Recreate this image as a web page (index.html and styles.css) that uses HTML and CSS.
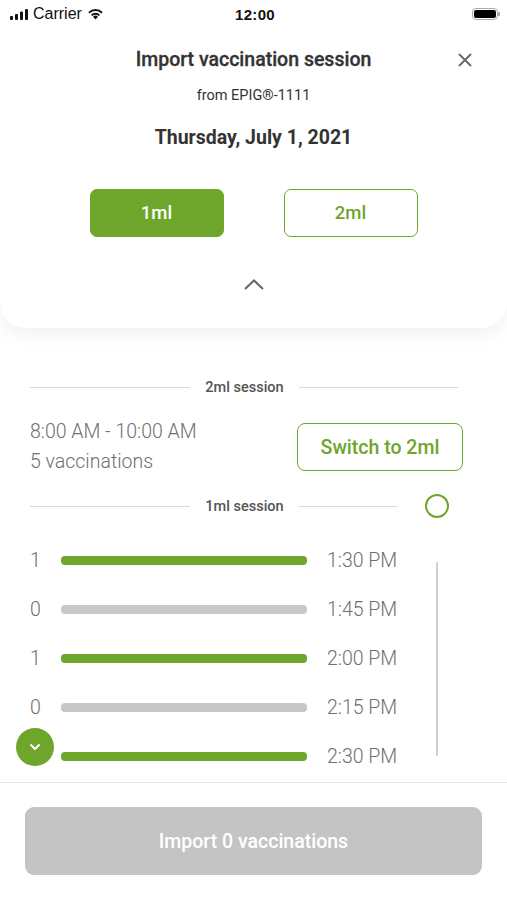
FILE: index.html
```html
<!DOCTYPE html>
<html>
<head>
<meta charset="utf-8">
<link rel="stylesheet" href="styles.css">
</head>
<body>
<div class="sheet">
	<div class="statusbar">
		<div class="sb-left">
			<svg width="18" height="11" viewBox="0 0 18 11"><rect x="0" y="7" width="3" height="4" rx="1"/><rect x="5" y="5" width="3" height="6" rx="1"/><rect x="10" y="2.5" width="3" height="8.5" rx="1"/><rect x="15" y="0" width="3" height="11" rx="1"/></svg>
			<span>Carrier</span>
			<svg width="17" height="12" viewBox="0 0 17 12"><path d="M8.5 11.5 L6 8.8 A3.6 3.6 0 0 1 11 8.8 Z"/><path d="M3.9 6.7 A6.6 6.6 0 0 1 13.1 6.7 L11.8 8.1 A4.7 4.7 0 0 0 5.2 8.1 Z"/><path d="M1.3 4 A10.3 10.3 0 0 1 15.7 4 L14.4 5.4 A8.4 8.4 0 0 0 2.6 5.4 Z"/></svg>
		</div>
		<div class="sb-time">12:00</div>
		<div class="sb-right">
			<div class="battery"><div class="battery-fill"></div></div>
			<div class="battery-tip"></div>
		</div>
	</div>

	<div class="head">
		<h1 class="title">Import vaccination session</h1>
		<svg class="close" width="14" height="14" viewBox="0 0 14 14"><path d="M1 1 L13 13 M13 1 L1 13"/></svg>
	</div>
	<p class="source">from EPIG®-1111</p>
	<p class="date">Thursday, July 1, 2021</p>

	<div class="dose-tabs">
		<button class="dose active">1ml</button>
		<button class="dose">2ml</button>
	</div>

	<div class="collapse">
		<svg width="20" height="11" viewBox="0 0 20 11"><path d="M1 10 L10 1.5 L19 10"/></svg>
	</div>
</div>

<div class="content">
	<div class="divider wide">
		<span class="line line-left"></span>
		<span class="divider-label">2ml session</span>
		<span class="line line-right"></span>
	</div>

	<div class="session">
		<div class="session-info">
			<div>8:00 AM - 10:00 AM</div>
			<div>5 vaccinations</div>
		</div>
		<button class="switch">Switch to 2ml</button>
	</div>

	<div class="session-head">
		<div class="divider">
			<span class="line line-left"></span>
			<span class="divider-label">1ml session</span>
			<span class="line line-right"></span>
		</div>
		<span class="radio"></span>
	</div>
</div>

<div class="slots">
	<div class="slot"><span class="count">1</span><span class="bar on"></span><span class="time">1:30 PM</span></div>
	<div class="slot"><span class="count">0</span><span class="bar"></span><span class="time">1:45 PM</span></div>
	<div class="slot"><span class="count">1</span><span class="bar on"></span><span class="time">2:00 PM</span></div>
	<div class="slot"><span class="count">0</span><span class="bar"></span><span class="time">2:15 PM</span></div>
	<div class="slot"><span class="count">1</span><span class="bar on"></span><span class="time">2:30 PM</span></div>
	<div class="scrollbar"></div>
	<div class="scroll-down">
		<svg width="12" height="8" viewBox="0 0 12 8"><path d="M2 2 L6 6 L10 2"/></svg>
	</div>
</div>

<div class="footer">
	<button class="import">Import 0 vaccinations</button>
</div>
</body>
</html>
```

FILE: styles.css
```css
* {
	box-sizing:border-box;
}
body {
	margin:0;
	width:507px;
	height:900px;
	overflow:hidden;
	background:#fff;
	font-family:Roboto, "Liberation Sans", sans-serif;
	color:#333;
}
p, h1 {
	margin:0;
}
button {
	font-family:inherit;
	cursor:pointer;
}

/* top sheet */
.sheet {
	background:#fff;
	border-radius:0 0 26px 26px;
	box-shadow:0 8px 18px rgba(0,0,0,0.05);
	padding-bottom:34px;
	text-align:center;
	position:relative;
}
.statusbar {
	height:28px;
	display:flex;
	align-items:center;
	justify-content:space-between;
	padding:0 7px 0 10px;
	font-family:"Liberation Sans", sans-serif;
	font-size:16px;
	color:#111;
}
.sb-left {
	display:flex;
	align-items:center;
	gap:5px;
	width:120px;
}
.sb-left svg {
	fill:#111;
}
.sb-time {
	font-size:15px;
	font-weight:bold;
	letter-spacing:0.3px;
}
.sb-right {
	width:120px;
	display:flex;
	justify-content:flex-end;
	align-items:center;
}
.battery {
	width:26px;
	height:12px;
	border:1.5px solid #aaa;
	border-radius:4px;
	padding:1px;
}
.battery-fill {
	width:100%;
	height:100%;
	background:#000;
	border-radius:2px;
}
.battery-tip {
	width:2px;
	height:4px;
	background:#aaa;
	border-radius:0 1px 1px 0;
}

.head {
	margin-top:20px;
	position:relative;
}
.title {
	font-size:19.5px;
	font-weight:500;
	line-height:24px;
	color:#333;
	-webkit-text-stroke:0.3px #333;
}
.close {
	position:absolute;
	right:35px;
	top:5px;
	stroke:#666;
	stroke-width:1.8;
	fill:none;
}
.source {
	margin-top:16px;
	font-size:14.5px;
	line-height:16px;
	color:#333;
}
.date {
	margin-top:22px;
	font-size:19.5px;
	font-weight:bold;
	line-height:24px;
	color:#333;
}
.dose-tabs {
	margin-top:39px;
	display:flex;
	justify-content:center;
	gap:60px;
}
.dose {
	width:134px;
	height:48px;
	border:1px solid #6da62b;
	border-radius:7px;
	background:#fff;
	color:#6da62b;
	font-size:18.5px;
	font-weight:500;
}
.dose.active {
	background:#6da62b;
	color:#fff;
}
.collapse {
	margin-top:37px;
	height:20px;
	display:flex;
	justify-content:center;
	align-items:center;
}
.collapse svg {
	stroke:#666;
	stroke-width:2;
	fill:none;
}

/* sessions */
.content {
	padding:49px 30px 0 30px;
}
.divider {
	display:flex;
	align-items:center;
	height:20px;
}
.divider.wide {
	margin-right:19px;
}
.line {
	height:1px;
	background:#d8d8d8;
}
.line-left {
	width:160px;
}
.line-right {
	flex:1;
}
.divider-label {
	width:109px;
	text-align:center;
	font-size:14.5px;
	font-weight:500;
	color:#555;
}
.session {
	margin-top:20px;
	margin-right:14px;
	height:60px;
	display:flex;
	align-items:center;
	justify-content:space-between;
}
.session-info {
	font-size:19.5px;
	font-weight:300;
	line-height:30px;
	color:#6f6f6f;
}
.switch {
	width:166px;
	height:48px;
	border:1px solid #6da62b;
	border-radius:8px;
	background:#fff;
	color:#6da62b;
	font-size:19.5px;
	font-weight:500;
}
.session-head {
	margin-top:17px;
	margin-right:28px;
	display:flex;
	align-items:center;
}
.session-head .divider {
	flex:1;
}
.radio {
	margin-left:28px;
	width:24px;
	height:24px;
	border:2.5px solid #6da62b;
	border-radius:50%;
}

/* time slots */
.slots {
	margin-top:18px;
	height:247px;
	overflow:hidden;
	position:relative;
	border-bottom:1px solid #e6e6e6;
	padding-left:30px;
}
.slot {
	height:49px;
	display:flex;
	align-items:center;
}
.count {
	width:31px;
	font-size:19.5px;
	font-weight:300;
	color:#6f6f6f;
}
.bar {
	width:246px;
	height:9px;
	border-radius:4px;
	background:#c8c8c8;
}
.bar.on {
	background:#6da62b;
}
.time {
	margin-left:20px;
	font-size:19.5px;
	font-weight:300;
	color:#6f6f6f;
}
.scrollbar {
	position:absolute;
	left:436px;
	top:26px;
	width:2px;
	height:194px;
	background:#cfcfcf;
	border-radius:1px;
}
.scroll-down {
	position:absolute;
	left:16px;
	top:192px;
	width:38px;
	height:38px;
	border-radius:50%;
	background:#6da62b;
	display:flex;
	align-items:center;
	justify-content:center;
}
.scroll-down svg {
	stroke:#fff;
	stroke-width:2;
	fill:none;
	stroke-linecap:round;
	stroke-linejoin:round;
}

/* footer */
.footer {
	padding:24px 25px 0 25px;
}
.import {
	width:100%;
	height:68px;
	border:0;
	border-radius:9px;
	background:#c4c4c4;
	color:#fff;
	font-size:19.5px;
	font-weight:500;
}
```
